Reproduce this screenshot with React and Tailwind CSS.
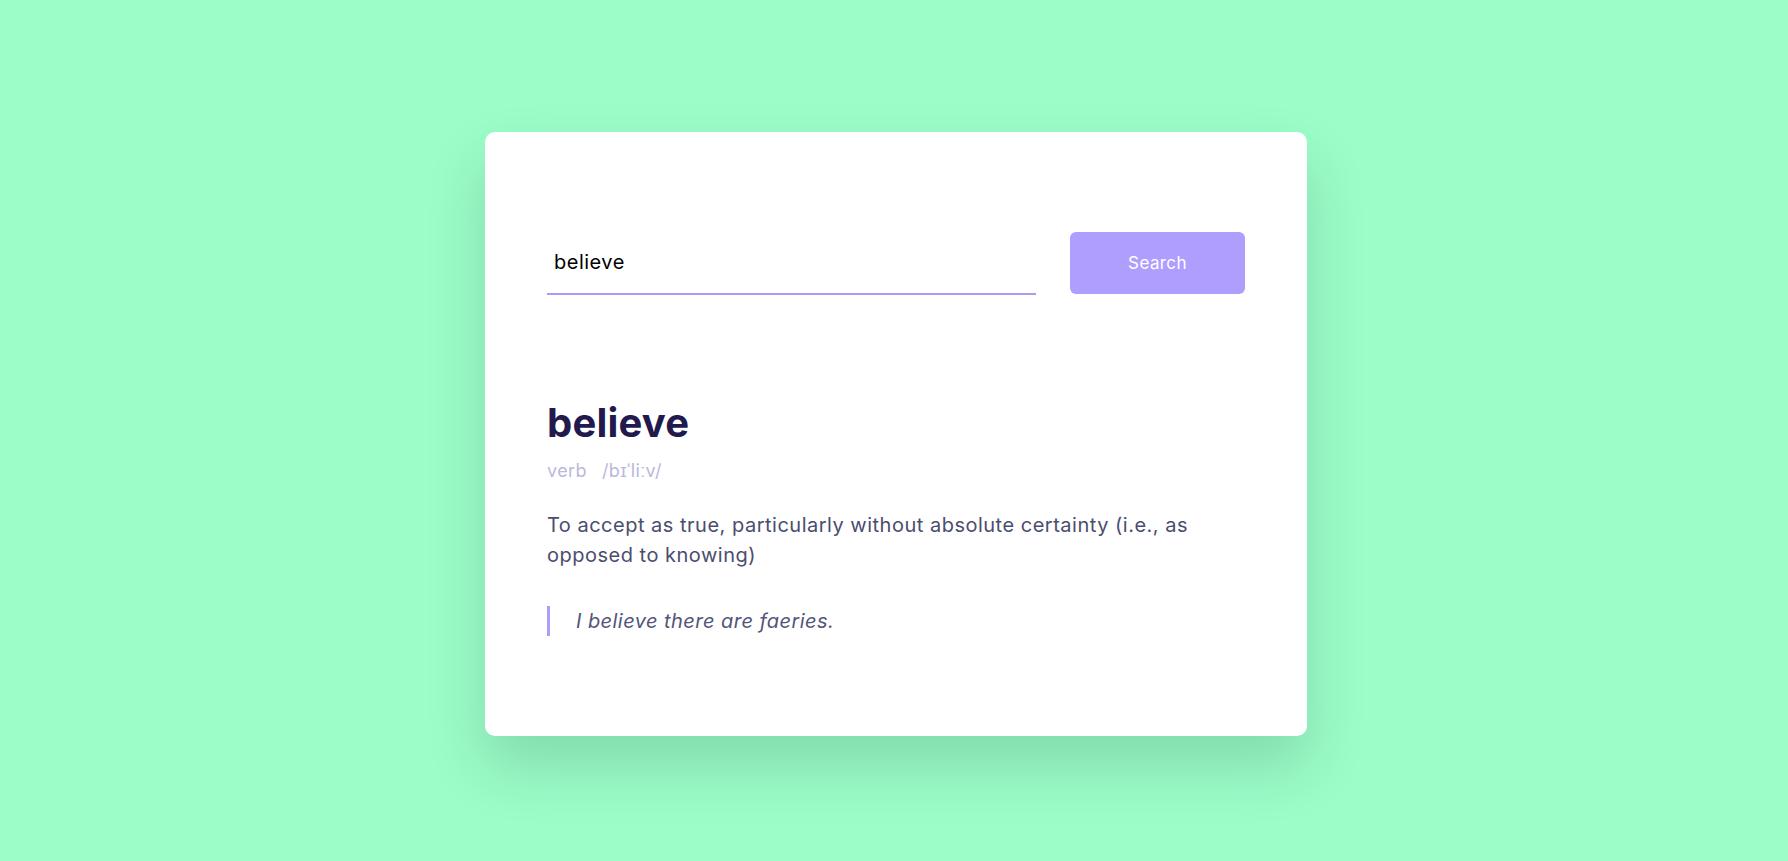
export default function App() {
  return (
    <div
      className="min-h-screen w-full bg-[#9cfdc9] flex items-center justify-center pt-[6px] pl-[4px]"
      style={{ fontFamily: "Inter, 'Open Sans', sans-serif" }}
    >
      <div className="w-[822px] h-[604px] bg-white rounded-[10px] shadow-[0_30px_60px_rgba(0,40,20,0.16)] px-[62px] pt-[100px]">
        <div className="flex items-stretch gap-[34px]">
          <input
            className="flex-1 h-[63px] border-b-2 border-[#a99cf6] outline-none px-[7px] text-[20px] tracking-[0.5px] text-black bg-transparent"
            defaultValue="believe"
            style={{ fontFamily: "Inter, 'Open Sans', sans-serif" }}
          />
          <button className="w-[175px] h-[62px] rounded-[6px] bg-[#b09efe] text-white text-[17px] tracking-[0.4px] pt-[3px]">
            Search
          </button>
        </div>

        <h1 className="mt-[104px] text-[40px] leading-[48px] font-bold text-[#22194d] tracking-[0.2px]">
          believe
        </h1>
        <div className="mt-[10px] flex gap-[15px] text-[18px] leading-[27px] tracking-[0.4px] text-[#bab8dd]">
          <span>verb</span>
          <span>/bɪˈliːv/</span>
        </div>
        <p className="mt-[26px] text-[20px] leading-[30px] tracking-[0.5px] text-[#4b4d6f]">
          To accept as true, particularly without absolute certainty (i.e., as
          opposed to knowing)
        </p>
        <div className="mt-[36px] border-l-[3px] border-[#ab9df8] pl-[26px] text-[20px] leading-[30px] italic tracking-[0.45px] text-[#52547a]">
          I believe there are faeries.
        </div>
      </div>
    </div>
  );
}
